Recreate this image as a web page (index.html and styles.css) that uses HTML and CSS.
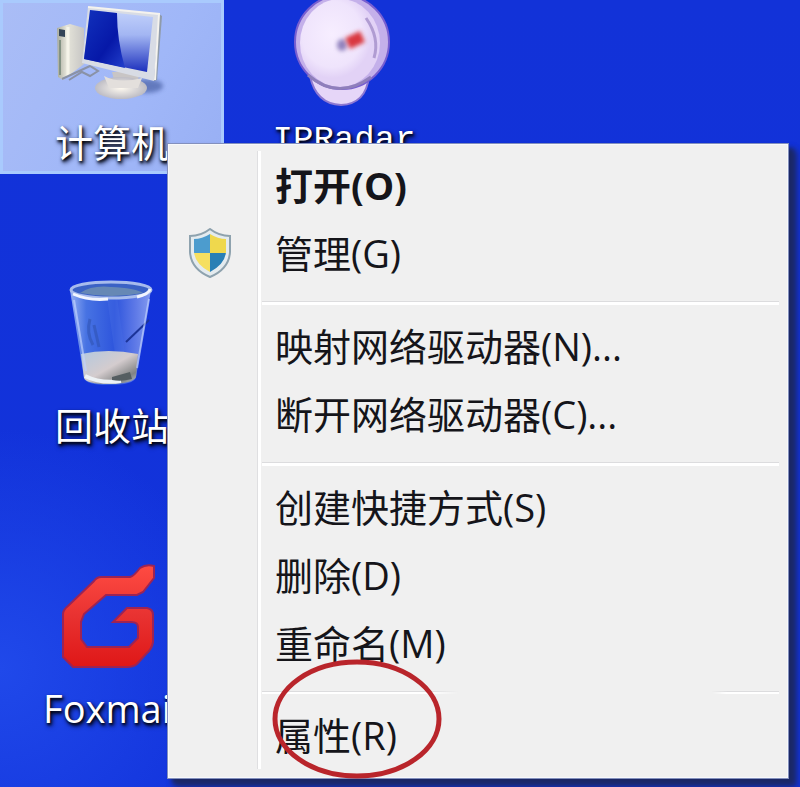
FILE: index.html
```html
<!DOCTYPE html>
<html lang="zh-CN">
<head>
<meta charset="utf-8">
<meta name="viewport" content="width=device-width, initial-scale=1">
<title>桌面</title>
<link rel="stylesheet" href="styles.css">
</head>
<body>
<main class="desktop">
  <div class="column">
    <a class="shortcut selected" href="#">
      <svg class="icon" viewBox="56 0 112 112" aria-hidden="true">
        <defs>
          <linearGradient id="screen" x1="0" y1="0" x2="0" y2="1"><stop offset="0" stop-color="#c3d2fb"/><stop offset=".4" stop-color="#a3b6f3"/><stop offset="1" stop-color="#1c30bd"/></linearGradient>
          <linearGradient id="dark" x1="0" y1="0" x2="1" y2="1"><stop offset="0" stop-color="#1232bd"/><stop offset=".6" stop-color="#0618a8"/><stop offset="1" stop-color="#2340cc"/></linearGradient>
          <linearGradient id="tower" x1="0" y1="0" x2="1" y2="0"><stop offset="0" stop-color="#a9ac9e"/><stop offset=".35" stop-color="#e6e5da"/><stop offset="1" stop-color="#c6c5c4"/></linearGradient>
          <radialGradient id="stand"><stop offset="0" stop-color="#fffaf0"/><stop offset="1" stop-color="#bdbcc4"/></radialGradient>
          <filter id="soft" x="-30%" y="-30%" width="160%" height="160%"><feGaussianBlur stdDeviation="2"/></filter>
        </defs>
        <ellipse cx="146" cy="86" rx="17" ry="7" fill="#4a61a5" opacity=".7" filter="url(#soft)"/>
        <path d="M57 28L70 24L84 28V64L63 80L58 77Z" fill="url(#tower)"/>
        <path d="M68 27V76" stroke="#f5f4e9" stroke-width="3"/>
        <path d="M59 29l6 1v7l-6-1z" fill="#344557"/>
        <path d="M60 40v35" stroke="#829283" stroke-width="2"/>
        <path d="M62 79L90 66L98 71L90 76L82 72L69 80" fill="none" stroke="#8a92a6" stroke-width="2"/>
        <path d="M112 72H140L137 84H115Z" fill="#c8c5c5"/>
        <ellipse cx="121" cy="88" rx="26" ry="11" fill="url(#stand)"/>
        <path d="M104 76Q119 84 142 78L138 88H109Z" fill="#e3dfdc"/>
        <path d="M88 7L159 14L154 81L82 63Z" fill="#d8dce5"/>
        <path d="M159 14L162 16L157 80L154 81Z" fill="#8f9baa"/>
        <path d="M90 10L153 17L147 72L84 59Z" fill="url(#screen)"/>
        <path d="M90 10L117 13Q117 40 125 68L84 59Z" fill="url(#dark)"/>
        <path d="M88 7L159 14L155 80" fill="none" stroke="#f5f3ee" stroke-width="2"/>
      </svg>
      <span class="label">计算机</span>
    </a>
    <a class="shortcut" href="#">
      <svg class="icon" viewBox="56 283 112 112" aria-hidden="true">
        <defs>
          <linearGradient id="glass" x1="0" y1="0" x2="1" y2="0"><stop offset="0" stop-color="#a3bcf6"/><stop offset=".2" stop-color="#4d7ae4"/><stop offset=".55" stop-color="#3159dd"/><stop offset=".8" stop-color="#6580e8"/><stop offset="1" stop-color="#90a6f2"/></linearGradient>
          <linearGradient id="base" x1="0" y1="0" x2="1" y2="1"><stop offset="0" stop-color="#b3c8df"/><stop offset=".5" stop-color="#d4ccce"/><stop offset=".8" stop-color="#818383"/><stop offset="1" stop-color="#b4c5dd"/></linearGradient>
        </defs>
        <path d="M70 290L84 378Q86 385 108 385Q134 385 136 377L151 290Z" fill="url(#glass)" opacity=".9"/>
        <path d="M90 319Q86 333 93 345M94 325L99 347" stroke="#3154b2" stroke-width="3" fill="none" opacity=".6"/>
        <path d="M126 342L149 320" stroke="#1c3498" stroke-width="2"/>
        <path d="M112 297L120 354" stroke="#4a70e5" stroke-width="10" opacity=".35"/>
        <path d="M81 354Q108 348 138 354L136 377Q132 384 108 384Q87 384 84 378Z" fill="url(#base)"/>
        <path d="M85 376Q101 384 121 381" stroke="#edf2f6" stroke-width="4" fill="none"/>
        <path d="M112 377L130 372L132 379Q121 382 112 380Z" fill="#555e61"/>
        <ellipse cx="111" cy="290" rx="40" ry="8" fill="#3b62c5" stroke="#a7bbed" stroke-width="3"/>
        <path d="M80 293Q92 285 111 287Q135 288 143 293Q112 299 80 293Z" fill="#6688b5"/>
        <path d="M73 294Q89 301 108 299M137 297Q149 294 150 289" stroke="#f1f5ff" stroke-width="3" fill="none"/>
        <path d="M74 300L86 371M149 299L137 368" stroke="#c3d4ff" stroke-width="2" opacity=".65"/>
      </svg>
      <span class="label">回收站</span>
    </a>
    <a class="shortcut" href="#">
      <svg class="icon" viewBox="56 566 112 112" aria-hidden="true">
        <defs><linearGradient id="red" x1="0" y1="0" x2="0" y2="1"><stop offset="0" stop-color="#ff4b42"/><stop offset=".5" stop-color="#e83231"/><stop offset="1" stop-color="#df1717"/></linearGradient></defs>
        <path d="M101 577H130Q134 576 140 568Q146 564 154 566V578L143 592L137 595H106L84 614L81 622V639L87 647H129L138 638V627Q138 622 131 622H113L127 608H147Q153 609 153 615V642Q152 649 146 654L137 664Q133 667 127 667H73L63 657V614Q63 610 68 606L94 581Q97 577 101 577Z" fill="url(#red)" stroke="#9c2455" stroke-width="2"/>
      </svg>
      <span class="label">Foxmail</span>
    </a>
  </div>
  <div class="column">
    <a class="shortcut" href="#">
      <svg class="icon" viewBox="289 0 112 112" aria-hidden="true">
        <defs>
          <radialGradient id="dish" cx=".4" cy=".4"><stop offset="0" stop-color="#f7eeff"/><stop offset=".75" stop-color="#efe4fc"/><stop offset="1" stop-color="#e2d2f6"/></radialGradient>
          <filter id="dot" x="-40%" y="-40%" width="180%" height="180%"><feGaussianBlur stdDeviation="2"/></filter>
        </defs>
        <path d="M311 76H370Q367 104 342 105Q317 104 311 76Z" fill="#e6d6f8" stroke="#8d78d2" stroke-width="2"/>
        <circle cx="343" cy="42" r="47" fill="#c4b0ea" stroke="#785fd0" stroke-width="2"/>
        <ellipse cx="341" cy="43" rx="40" ry="44" fill="url(#dish)"/>
        <path d="M309 75Q339 101 372 77" stroke="#8f7fbb" stroke-width="3" fill="none"/>
        <path d="M367 18Q381 38 375 58" stroke="#b09cd2" stroke-width="3" fill="none"/>
        <ellipse cx="343" cy="45" rx="5" ry="6" fill="#9182bd" filter="url(#dot)"/>
        <path d="M346 38L361 31L366 42L351 49Z" fill="#d9383f" filter="url(#dot)"/>
      </svg>
      <span class="label bitmap">IPRadar</span>
    </a>
  </div>

  <div class="menu" role="menu">
    <button class="item default" role="menuitem">打开(O)</button>
    <button class="item" role="menuitem">
      <svg class="shield" viewBox="0 0 44 50" aria-hidden="true">
        <defs><clipPath id="inner"><path d="M22 6Q30 11 38 11V24Q37 36 22 44Q7 36 6 24V11Q14 11 22 6Z"/></clipPath></defs>
        <path d="M22 1Q31 8 42 8V24Q41 41 22 49Q3 41 2 24V8Q13 8 22 1Z" fill="#e4ebef" stroke="#8ea2ae" stroke-width="2"/>
        <g clip-path="url(#inner)"><path d="M0 0H22V25H0Z" fill="#4c9cce"/><path d="M22 0H44V25H22Z" fill="#efd84d"/><path d="M0 25H22V50H0Z" fill="#f6df60"/><path d="M22 25H44V50H22Z" fill="#287fb5"/></g>
      </svg>
      管理(G)
    </button>
    <hr class="rule">
    <button class="item" role="menuitem">映射网络驱动器(N)...</button>
    <button class="item" role="menuitem">断开网络驱动器(C)...</button>
    <hr class="rule">
    <button class="item" role="menuitem">创建快捷方式(S)</button>
    <button class="item" role="menuitem">删除(D)</button>
    <button class="item" role="menuitem">重命名(M)</button>
    <hr class="rule broken">
    <button class="item" role="menuitem">属性(R)
      <svg class="ring" viewBox="0 0 170 120" aria-hidden="true"><ellipse cx="85" cy="60" rx="82" ry="57" fill="none" stroke="#b9252b" stroke-width="5"/></svg>
    </button>
  </div>
</main>
</body>
</html>
```
FILE: styles.css
```css
* {
  box-sizing: border-box;
}

body {
  margin: 0;
  font-family: "Open Sans", "Noto Sans CJK SC", sans-serif;
  font-size: 38px;
}

.desktop {
  position: relative;
  display: flex;
  gap: 8px;
  min-height: 100vh;
  overflow: hidden;
  background:
    radial-gradient(circle at 0 85%, #2049ea 0, transparent 240px),
    linear-gradient(#1232d8, #1233dc);
}

.column {
  display: flex;
  flex-direction: column;
  gap: 109px;
  width: 224px;
}

.shortcut {
  display: flex;
  flex-direction: column;
  align-items: center;
  height: 174px;
  color: #fff;
  text-decoration: none;
}

.selected {
  background: linear-gradient(120deg, #aabdf6, #a0b7f8 60%, #98aff4);
  box-shadow: inset 0 0 0 3px #a9cafd;
}

.icon {
  flex: none;
  width: 112px;
  height: 112px;
  overflow: visible;
}

.label {
  line-height: 60px;
  white-space: nowrap;
  text-shadow: 1px 2px 3px #000, 2px 3px 5px #000a30;
}

.bitmap {
  font-family: "Liberation Mono", monospace;
  font-size: 34px;
  line-height: 56px;
}

.menu {
  position: absolute;
  top: 143px;
  left: 167px;
  right: 11px;
  padding: 6px 8px 8px 4px;
  border: 2px solid #f7f8fb;
  outline: 1px solid #8390bd;
  outline-offset: -1px;
  background: #f0f0f0;
  box-shadow: 5px 5px 5px #1b2864, 8px 8px 6px #1b2c80;
}

.menu::before {
  content: "";
  position: absolute;
  top: 6px;
  bottom: 8px;
  left: 88px;
  width: 3px;
  border-left: 1px solid #dfdfe1;
  background: #fff;
}

.item {
  position: relative;
  display: block;
  width: 100%;
  height: 68px;
  padding: 0 0 0 102px;
  border: 0;
  background: none;
  color: #15151a;
  font: inherit;
  line-height: 66px;
  text-align: left;
  white-space: nowrap;
}

.default {
  font-weight: 700;
}

.shield {
  position: absolute;
  top: 9px;
  left: 15px;
  width: 44px;
  height: 50px;
}

.rule {
  height: 4px;
  margin: 14px 0 7px 89px;
  border: 0;
  border-top: 1px solid #dcdcde;
  background: #fff;
}

.broken {
  height: 3px;
  -webkit-mask-image: linear-gradient(90deg, #000 32%, transparent 38%, transparent 87%, #000 90%);
  mask-image: linear-gradient(90deg, #000 32%, transparent 38%, transparent 87%, #000 90%);
}

.ring {
  position: absolute;
  top: -42px;
  left: 99px;
  width: 170px;
  height: 120px;
  pointer-events: none;
}
```
